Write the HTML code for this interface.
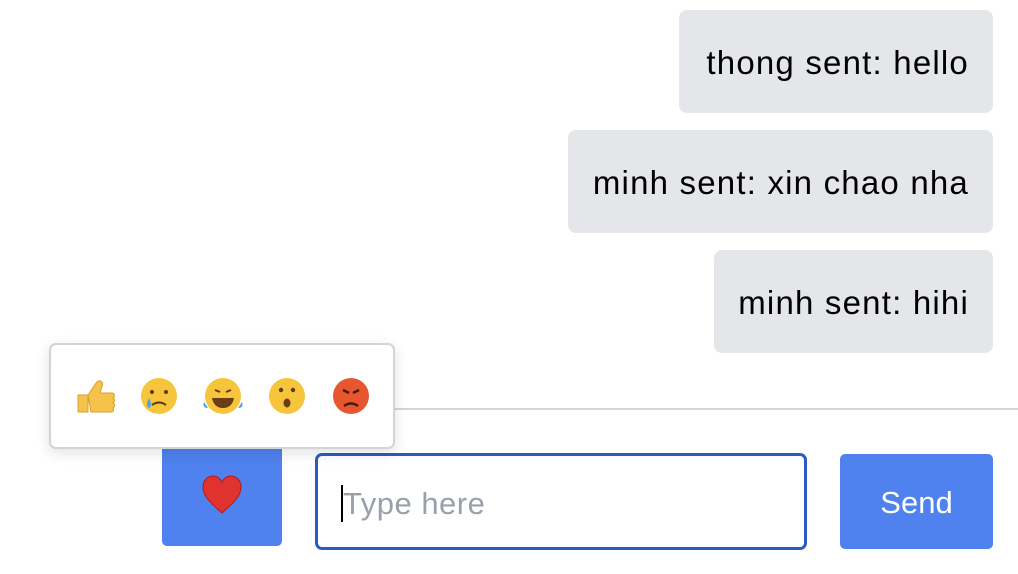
<!DOCTYPE html>
<html><head><style>
body{margin:0;width:1018px;height:574px;background:#fff;font-family:"Liberation Sans",sans-serif;position:relative;overflow:hidden}
.b{position:absolute;right:25px;height:103px;background:#e5e6ea;border-radius:8px;font-size:33px;letter-spacing:1.2px;line-height:105px;padding:0 24px;box-sizing:border-box;color:#000;white-space:nowrap;text-align:right}
.line{position:absolute;left:380px;right:0;top:408px;height:2px;background:#d5d5d5}
.pop{position:absolute;left:49px;top:343px;width:346px;height:106px;box-sizing:border-box;border:2px solid #d2d4d8;border-radius:7px;background:#fff;box-shadow:0 4px 14px rgba(0,0,0,.12);z-index:2}
.heart{position:absolute;left:162px;top:440px;width:120px;height:106px;background:#4f82ee;border-radius:0 0 5px 5px}
.inp{position:absolute;left:315px;top:453px;width:492px;height:97px;box-sizing:border-box;border:3px solid #2a5bc4;border-radius:7px;font-size:31px;letter-spacing:0.5px;color:#9aa0ab;padding:0 0 0 25px;line-height:95px}
.inp:before{content:"";position:absolute;left:23px;top:29px;width:2px;height:37px;background:#000}
.send{position:absolute;left:840px;top:454px;width:153px;height:95px;background:#4f82ee;border-radius:5px;color:#fff;font-size:31px;text-align:center;line-height:97px}
</style></head><body>
<div class="b" style="top:10px;width:314px">thong sent: hello</div>
<div class="b" style="top:130px;width:425px">minh sent: xin chao nha</div>
<div class="b" style="top:250px;width:279px">minh sent: hihi</div>
<div class="line"></div>
<div class="heart"><svg width="120" height="106" viewBox="0 0 120 106"><path d="M60 73 C46 61 41 55 41 47 C41 40 46 36 51 36 C55 36 58 38 60 42 C62 38 65 36 69 36 C74 36 79 40 79 47 C79 55 74 61 60 73Z" fill="#e0322e" stroke="#b01c1c" stroke-width="1"/></svg></div>
<div class="pop"><svg width="342" height="102" viewBox="0 0 342 102">
<g transform="translate(-49,-345)">
<path d="M76 395 h10 v17 h-10z M86 395 l8 -12 c3 -4 8 -2 6 4 l-2 6 h12 c3 0 3 4 1 5 c2 1 2 4 0 5 c2 1 2 4 0 5 c1 1 1 4 -2 4 h-20 z" fill="#f5c24a" stroke="#d9a030" stroke-width="1"/>
<circle cx="157" cy="396" r="18" fill="#f7c53b"/><circle cx="150" cy="392" r="2" fill="#5a3a10"/><circle cx="164" cy="392" r="2" fill="#5a3a10"/><path d="M150 405 q7 -5 14 0" stroke="#5a3a10" stroke-width="2" fill="none"/><path d="M147 398 q-4 8 0 10 q4 -2 0 -10z" fill="#4ba3e8"/>
<circle cx="221" cy="396" r="18" fill="#f7c53b"/><path d="M210 398 h22 q-2 10 -11 10 q-9 0 -11 -10z" fill="#6a3d12"/><path d="M213 390 l5 2 M229 390 l-5 2" stroke="#5a3a10" stroke-width="2"/><path d="M202 402 q-2 6 4 6 z M240 402 q2 6 -4 6z" fill="#4ba3e8"/>
<circle cx="285" cy="396" r="18" fill="#f7c53b"/><circle cx="279" cy="390" r="2.2" fill="#5a3a10"/><circle cx="291" cy="390" r="2.2" fill="#5a3a10"/><ellipse cx="285" cy="403" rx="3.5" ry="4.5" fill="#6a3d12"/>
<circle cx="349" cy="396" r="18" fill="#e8562f"/><path d="M341 390 l6 3 M357 390 l-6 3" stroke="#4a1a08" stroke-width="2.5"/><path d="M342 406 q7 -5 14 0" stroke="#4a1a08" stroke-width="2.5" fill="none"/>
</g></svg></div>
<div class="inp">Type here</div>
<div class="send">Send</div>
</body></html>
